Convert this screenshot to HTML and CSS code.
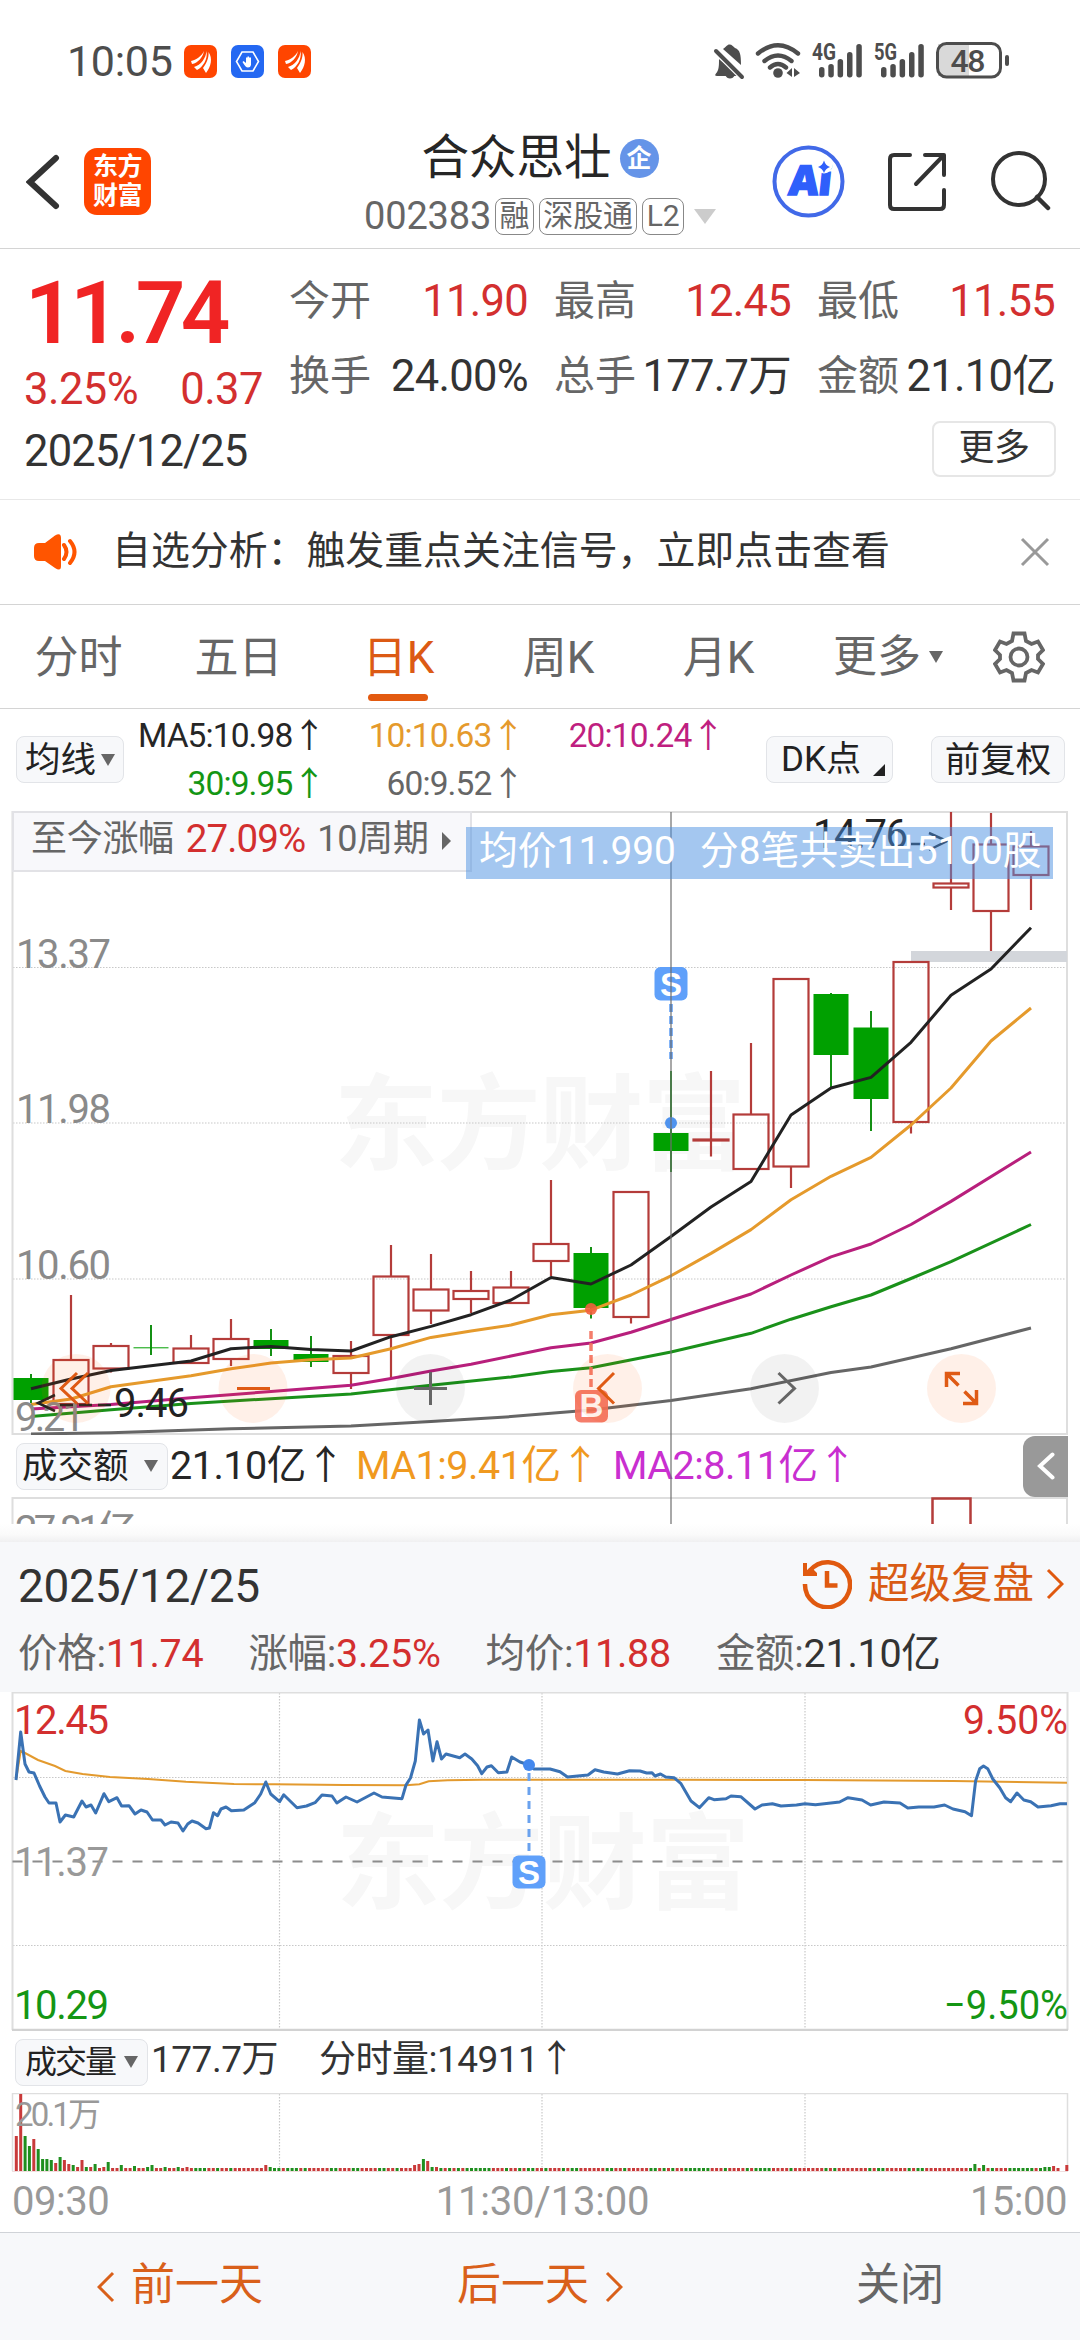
FILE: index.html
```html
<!DOCTYPE html>
<html lang="zh-CN">
<head>
    <meta charset="UTF-8">
    <meta name="viewport" content="width=device-width, initial-scale=1.0">
    <title>合众思壮 002383</title>
    <link rel="stylesheet" href="styles.css">
</head>
<body>

    <!-- status bar -->
    <div class="status-bar">
        <span class="clock">10:05</span>
        <svg class="app-dot" viewBox="0 0 33 33">
            <rect width="33" height="33" rx="7" fill="#ff4500"/>
            <path d="M7 16C12 15 18 11 20 6C19 12 14 18 8 19ZM10 22C17 20 22 13 22.500 6C24 14 19 22 13 25ZM19 23C23 18 25 12 24.500 7C29 13 27 22 22 28Z" fill="#fff"/>
        </svg>
        <svg class="app-dot" viewBox="0 0 33 33">
            <rect width="33" height="33" rx="7" fill="#2468f2"/>
            <path d="M11 7H22L27.500 16.500L22 26H11L5.500 16.500Z" fill="none" stroke="#fff" stroke-width="1.600"/>
            <path d="M12.500 16L15 18V12.500H16.500V11.500H18V12.500H20V20Q19.500 22.500 17 22.500Q14.500 22.500 11.500 17Z" fill="#fff"/>
        </svg>
        <svg class="app-dot" viewBox="0 0 33 33">
            <rect width="33" height="33" rx="7" fill="#ff4500"/>
            <path d="M7 16C12 15 18 11 20 6C19 12 14 18 8 19ZM10 22C17 20 22 13 22.500 6C24 14 19 22 13 25ZM19 23C23 18 25 12 24.500 7C29 13 27 22 22 28Z" fill="#fff"/>
        </svg>
        <svg class="status-icons" viewBox="712 40 300 42">
            <g fill="#4d4d4d">
                <path d="M716 73.500C719 70 719 66 719 59L740 76H717Q714 76 716 73.500ZM723 49C726 47 727 44.500 729.500 44.500S733 46.500 735 48C740 50 741 54 741 65ZM725 75H735Q733 78.500 730 78.500T725 75Z"/>
                <path d="M716 50L742 76" stroke="#fff" stroke-width="8"/>
                <path d="M716 51L742 77" stroke="#4d4d4d" stroke-width="4" stroke-linecap="round"/>
                <circle cx="778" cy="73" r="4.800"/>
                <path d="M792 68V77L786.500 73ZM794 68V77L800 73Z"/>
                <rect x="819" y="67" width="5.500" height="10.500" rx="2.700"/><rect x="828.300" y="64" width="5.500" height="13.500" rx="2.700"/><rect x="837.600" y="59" width="5.500" height="18.500" rx="2.700"/><rect x="847" y="52" width="5.500" height="25.500" rx="2.700"/><rect x="856.300" y="44" width="5.500" height="33.500" rx="2.700"/>
                <rect x="881" y="67" width="5.500" height="10.500" rx="2.700"/><rect x="890.300" y="64" width="5.500" height="13.500" rx="2.700"/><rect x="899.600" y="59" width="5.500" height="18.500" rx="2.700"/><rect x="909" y="52" width="5.500" height="25.500" rx="2.700"/><rect x="918.300" y="44" width="5.500" height="33.500" rx="2.700"/>
                <rect x="1005" y="55" width="4" height="11" rx="2"/>
                <text x="812" y="60" class="net" textLength="24" lengthAdjust="spacingAndGlyphs">4G</text>
                <text x="874" y="60" class="net" textLength="23" lengthAdjust="spacingAndGlyphs">5G</text>
            </g>
            <path d="M758 53.500Q778 37 798 53.500M764.500 61Q778 50 791.500 61M770 67.500Q778 60.500 786 67.500" fill="none" stroke="#4d4d4d" stroke-width="4.400" stroke-linecap="round"/>
            <path d="M938 44H969V76H938Z" fill="#d9d9d9"/>
            <rect x="937.500" y="43.500" width="63" height="33.500" rx="9" fill="none" stroke="#4d4d4d" stroke-width="3"/>
            <text x="950.500" y="72" class="battery" textLength="35">48</text>
        </svg>
    </div>

    <!-- title bar -->
    <div class="header">
        <div class="header-left">
            <svg class="back" viewBox="0 0 34 56"><path d="M30 4L4 28L30 52" fill="none" stroke="#333" stroke-width="6" stroke-linecap="round"/></svg>
            <div class="logo">东方<br>财富</div>
        </div>
        <div class="header-title">
            <div class="name">合众思壮<span class="qi">企</span></div>
            <div class="code">002383<span class="tag tag-first">融</span><span class="tag">深股通</span><span class="tag">L2</span><i class="tri-down light"></i></div>
        </div>
        <div class="header-right">
            <svg class="ai" viewBox="0 0 73 73">
                <circle cx="36.500" cy="36.500" r="34" fill="#fff" stroke="#4169e8" stroke-width="4"/>
                <text x="16" y="50.500" class="ai-text" textLength="43" transform="translate(5 0) skewX(-6)">Ai</text>
                <circle cx="52" cy="20" r="8.500" fill="#fff"/>
                <path d="M52 15.500Q53.500 20.500 58 22Q53.500 23.500 52 28Q50.500 23.500 46 22Q50.500 20.500 52 15.500Z" fill="#2f5ffb"/>
            </svg>
            <svg class="share" viewBox="0 0 58 58"><path d="M22 2H6Q2 2 2 6V52Q2 56 6 56H52Q56 56 56 52V37M37 2H56V22M55 3L28 31" fill="none" stroke="#333" stroke-width="4" stroke-linecap="round" stroke-linejoin="round"/></svg>
            <svg class="search" viewBox="0 0 60 60"><circle cx="28" cy="28" r="26" fill="none" stroke="#333" stroke-width="4"/><path d="M46 46L57 57" stroke="#333" stroke-width="4.500" stroke-linecap="round"/></svg>
        </div>
    </div>

    <!-- quote -->
    <div class="quote">
        <div class="quote-left">
            <div class="price">11.74</div>
            <div class="change"><span>3.25%</span><span>0.37</span></div>
            <div class="date">2025/12/25</div>
        </div>
        <div class="quote-right">
            <div class="cells">
                <div class="cell"><label>今开</label><b class="red">11.90</b></div>
                <div class="cell"><label>最高</label><b class="red">12.45</b></div>
                <div class="cell"><label>最低</label><b class="red">11.55</b></div>
                <div class="cell"><label>换手</label><b>24.00%</b></div>
                <div class="cell"><label>总手</label><b>177.7万</b></div>
                <div class="cell"><label>金额</label><b>21.10亿</b></div>
            </div>
            <div class="more">更多</div>
        </div>
    </div>

    <div class="notice">
        <svg class="speaker" viewBox="0 0 46 38">
            <path d="M6 10H12L22 2.500Q28 -1 28 5V33Q28 39 22 35L12 28H6Q1 28 1 23V15Q1 10 6 10Z" fill="#ff5500"/>
            <path d="M31 12Q36 19 31 26M37 8Q46 19 37 30" fill="none" stroke="#ff5500" stroke-width="4" stroke-linecap="round"/>
        </svg>
        <span>自选分析：触发重点关注信号，立即点击查看</span>
        <svg class="close" viewBox="0 0 30 30"><path d="M2 2L28 28M28 2L2 28" stroke="#999" stroke-width="3"/></svg>
    </div>

    <div class="tabs">
        <span>分时</span>
        <span>五日</span>
        <span class="active">日K</span>
        <span>周K</span>
        <span>月K</span>
        <span class="tab-more">更多<i class="tri-down"></i></span>
        <svg class="gear" viewBox="0 0 52 52"><path d="M20.500 2.500H31.500L33 10L38.500 13L45 10.500L50 19L45 24V28L50 33L45 41.500L38.500 39L33 42L31.500 49.500H20.500L19 42L13.500 39L7 41.500L2 33L7 28V24L2 19L7 10.500L13.500 13L19 10Z" fill="none" stroke="#666" stroke-width="3.800"/><circle cx="26" cy="26" r="8.500" fill="none" stroke="#666" stroke-width="3.800"/></svg>
    </div>

    <!-- moving averages -->
    <div class="ma-bar">
        <div class="btn btn-ma">均线<i class="tri-down"></i></div>
        <div class="ma-values">
            <span>MA5:10.98↑</span><span class="ma10">10:10.63↑</span><span class="ma20">20:10.24↑</span>
            <span class="ma30">30:9.95↑</span><span class="ma60">60:9.52↑</span>
        </div>
        <div class="btn btn-dk">DK点<i class="corner"></i></div>
        <div class="btn btn-fq">前复权</div>
    </div>

    <!-- daily K chart -->
    <div class="k-section">
        <svg class="k-chart" viewBox="0 810 1080 624">
            <text x="334" y="1161" class="watermark" textLength="412">东方财富</text>
            <g stroke="#c8c8c8" stroke-width="1.200" stroke-dasharray="1.500 1.500">
                <path d="M13 966.500H1067M13 1122H1067M13 1278H1067"/>
            </g>
            <path d="M12.500 811H1067V1433H12.500Z" fill="none" stroke="#dedede" stroke-width="2"/>
            <rect x="911" y="950" width="156" height="11" fill="#d3d6db"/>
            <g class="axis">
                <text x="16" y="966.500" textLength="95">13.37</text>
                <text x="16" y="1122" textLength="95">11.98</text>
                <text x="16" y="1278" textLength="95">10.60</text>
            </g>
            <g id="candles"></g>
            <g id="ma-lines" fill="none" stroke-width="3" stroke-linejoin="round"></g>
            <g class="axis"><text x="15" y="1430" textLength="70">9.21</text></g>
            <text x="114" y="1416" class="mark" textLength="75">9.46</text>
            <path d="M55 1394L38 1402L55 1410M60 1404H73M79 1404H92M98 1404H111" fill="none" stroke="#222" stroke-width="2.500"/>
            <text x="813" y="847" class="mark" textLength="95">14.76</text>
            <path d="M911 843H925M929 832L947 840L929 849" fill="none" stroke="#222" stroke-width="2.500"/>

            <!-- B / S trade marks -->
            <g opacity="0.9">
                <path d="M591 1330V1387" stroke="#f4705c" stroke-width="3.500" stroke-dasharray="8 4"/>
                <circle cx="591" cy="1308" r="6" fill="#f4603e"/>
                <rect x="575" y="1389" width="33" height="32.500" rx="6" fill="#f4705c"/>
                <text x="591.500" y="1416" class="bs">B</text>
            </g>
            <path d="M671 1003V1058" stroke="#5b9cf5" stroke-width="3.500" stroke-dasharray="8 4"/>
            <circle cx="671" cy="1122" r="6" fill="#4f93ee"/>
            <rect x="654.500" y="966" width="33" height="33.500" rx="6" fill="#5fa0fa"/>
            <text x="671" y="994.500" class="bs">S</text>

            <!-- round tool buttons -->
            <g fill="rgba(255,90,0,0.09)">
                <circle cx="76" cy="1387.400" r="34.500"/><circle cx="253" cy="1387.400" r="34.500"/><circle cx="607.500" cy="1387.400" r="34.500"/><circle cx="961.500" cy="1387.400" r="34.500"/>
            </g>
            <g fill="rgba(0,0,0,0.05)">
                <circle cx="430.500" cy="1387.400" r="34.500"/><circle cx="784.500" cy="1387.400" r="34.500"/>
            </g>
            <g fill="none" stroke="#df5a14" stroke-width="3">
                <path d="M77 1372L61 1387.400L77 1402.500M88 1372L72 1387.400L88 1402.500M237 1387.400H270M614 1372L598.500 1387.400L614 1402.500"/>
                <path d="M960 1372.500H946.500V1386M946.500 1372.500L958.500 1384.500M963 1402.500H976.500V1389M976.500 1402.500L964.500 1390.500" stroke-width="3.500"/>
            </g>
            <path d="M414 1387.400H447M430.500 1371V1404M778.500 1372L794.500 1387.400L778.500 1402.500" fill="none" stroke="#666" stroke-width="3"/>
        </svg>

        <div class="gain">至今涨幅<em>27.09%</em>10周期<i class="tri-right"></i></div>
        <div class="crosshair"></div>
        <div class="trade-tip"><span>均价11.990</span><span>分8笔共卖出5100股</span></div>

        <div class="vol-head">
            <div class="btn btn-amount">成交额<i class="tri-down"></i></div>
            <span class="amt">21.10亿↑</span>
            <span class="amt amt1">MA1:9.41亿↑</span>
            <span class="amt amt2">MA2:8.11亿↑</span>
            <div class="side-tab"><svg viewBox="0 0 18 28"><path d="M15.500 2.500L3 14L15.500 25.500" fill="none" stroke="#fff" stroke-width="4" stroke-linecap="round"/></svg></div>
        </div>
        <svg class="vol-strip" viewBox="0 1496 1080 27">
            <path d="M12.500 1530V1497H1067V1530" fill="none" stroke="#dedede" stroke-width="2"/>
            <text x="15" y="1543" class="axis" textLength="122">27.81亿</text>
            <path d="M932.500 1530V1497.500H970.500V1530" fill="none" stroke="#b43c3a" stroke-width="2.500"/>
        </svg>
    </div>
    <div class="shade"></div>

    <!-- replay panel -->
    <div class="replay">
        <div class="replay-top">
            <span class="replay-date">2025/12/25</span>
            <span class="replay-link">
                <svg class="history" viewBox="0 0 50 50"><path d="M3 25A22.500 22.500 0 1 0 8 11.500" fill="none" stroke="#e0590f" stroke-width="4.500"/><path d="M1 4H5V11L9 8L15 14V17H1Z" fill="#e0590f"/><path d="M25 12V26.500H35.500" fill="none" stroke="#e0590f" stroke-width="4.500"/></svg>
                超级复盘
                <svg class="chev" viewBox="0 0 18 32"><path d="M2 2L16 16L2 30" fill="none" stroke="#e0590f" stroke-width="3"/></svg>
            </span>
        </div>
        <div class="replay-stats">
            <span>价格:<b class="red">11.74</b></span>
            <span>涨幅:<b class="red">3.25%</b></span>
            <span>均价:<b class="red">11.88</b></span>
            <span>金额:<b>21.10亿</b></span>
        </div>
    </div>

    <!-- minute chart -->
    <svg class="minute-chart" viewBox="0 1691 1080 339">
        <text x="336" y="1900" class="watermark" textLength="414">东方财富</text>
        <path d="M13 1776.500H1067M13 1944.500H1067M279.500 1692V2028M542 1692V2028M805 1692V2028" stroke="#c8c8c8" stroke-width="1.200" stroke-dasharray="1.500 1.500"/>
        <path d="M12.500 2029V1691.500H1067.500V2029" fill="none" stroke="#dedede" stroke-width="2"/>
        <path d="M12 2029H1068" stroke="#d2d2d2" stroke-width="2.500"/>
        <path d="M12.500 1860.500H1067" stroke="#8c8c8c" stroke-width="2" stroke-dasharray="10 10"/>
        <text x="14" y="1732.700" class="axis up" textLength="95">12.45</text>
        <text x="14" y="1874.700" class="axis flat" textLength="95">11.37</text>
        <text x="14" y="2018" class="axis down" textLength="95">10.29</text>
        <text x="963" y="1732.700" class="axis up" textLength="105" lengthAdjust="spacingAndGlyphs">9.50%</text>
        <text x="944" y="2018" class="axis down" textLength="124" lengthAdjust="spacingAndGlyphs">−9.50%</text>
        <polyline id="avg-line" fill="none" stroke="#e39a2e" stroke-width="2"/>
        <polyline id="price-line" fill="none" stroke="#3a72b4" stroke-width="3" stroke-linejoin="round"/>
        <path d="M529 1764V1855" stroke="#6aa2ee" stroke-width="3" stroke-dasharray="8 6" stroke-dashoffset="-8"/>
        <circle cx="529" cy="1764" r="6" fill="#4388ee"/>
        <rect x="512.500" y="1854.500" width="33" height="33" rx="6" fill="#5fa0fa"/>
        <text x="529" y="1883" class="bs">S</text>
    </svg>

    <div class="minute-head">
        <div class="btn btn-vol">成交量<i class="tri-down"></i></div>
        <span>177.7万</span>
        <span class="minute-vol">分时量:14911↑</span>
    </div>

    <svg class="minute-bars" viewBox="0 2092 1080 80">
        <path d="M279.500 2093V2170M542 2093V2170M805 2093V2170" stroke="#c8c8c8" stroke-width="1.200" stroke-dasharray="1.500 1.500"/>
        <path d="M12.500 2170V2092.500H1067.500V2170" fill="none" stroke="#dedede" stroke-width="1.500"/>
        <path d="M12 2170.500H1068" stroke="#efdede" stroke-width="1"/>
        <g id="bars"></g>
        <text x="15" y="2124.700" class="axis small" textLength="86">20.1万</text>
    </svg>

    <div class="times"><span>09:30</span><span class="noon">11:30/13:00</span><span>15:00</span></div>

    <div class="footer">
        <span><svg class="chev" viewBox="0 0 18 32"><path d="M16 2L2 16L16 30" fill="none" stroke="#d9601a" stroke-width="3"/></svg>前一天</span>
        <span>后一天<svg class="chev" viewBox="0 0 18 32"><path d="M2 2L16 16L2 30" fill="none" stroke="#d9601a" stroke-width="3"/></svg></span>
        <span class="shut">关闭</span>
    </div>

    <script src="script.js"></script>
</body>
</html>
```

FILE: styles.css
```css
* {
    box-sizing: border-box;
}

body {
    margin: 0;
    width: 1080px;
    height: 2340px;
    overflow: hidden;
    background: #fff;
    color: #333;
    font-family: Roboto, "Noto Sans CJK SC", sans-serif;
    letter-spacing: -0.5px;
}

svg {
    display: block;
    flex: none;
}

b, em, i {
    font-weight: normal;
    font-style: normal;
}

.red {
    color: #d32f2f;
}

/* --- Small triangles --- */
.tri-down {
    display: block;
    border: 7.5px solid transparent;
    border-top: 12px solid #666;
    border-bottom: 0;
}

.tri-down.light {
    border-width: 11px;
    border-top: 15px solid #ccc;
    border-bottom: 0;
    margin-left: 10px;
}

.tri-right {
    border: 9px solid transparent;
    border-left: 9px solid #666;
    border-right: 0;
    margin: 4px 0 0 13px;
}

.corner {
    border-bottom: 12px solid #222;
    border-left: 12px solid transparent;
    margin: 20px 0 0 12px;
}

/* --- Status bar --- */
.status-bar {
    display: flex;
    height: 110px;
    padding: 40px 68px 0 67px;
}

.clock {
    width: 117px;
    font-size: 43px;
    line-height: 43px;
    color: #4d4d4d;
    letter-spacing: -0.3px;
}

.app-dot {
    width: 33px;
    height: 33px;
    margin: 5px 14px 0 0;
}

.status-icons {
    width: 300px;
    height: 42px;
    margin-left: auto;
}

.net {
    font-size: 23px;
    font-weight: 700;
    letter-spacing: 0;
}

.battery {
    font-size: 32px;
    font-weight: 500;
    fill: #4d4d4d;
    letter-spacing: 0;
}

/* --- Header --- */
.header {
    display: grid;
    grid-template-columns: 308px 1fr 308px;
    height: 139px;
    border-bottom: 1px solid #d4d4d4;
}

.header-left {
    display: flex;
    padding: 38px 0 0 26px;
}

.back {
    width: 34px;
    height: 56px;
    margin: 6px 24px 0 0;
}

.logo {
    width: 67px;
    height: 67px;
    padding-top: 4px;
    border-radius: 13px;
    background: #ff4500;
    color: #fff;
    font-size: 25px;
    font-weight: 700;
    line-height: 29px;
    text-align: center;
}

.header-title {
    display: flex;
    flex-direction: column;
    align-items: center;
    padding-top: 23px;
}

.name {
    display: flex;
    align-items: center;
    height: 50px;
    font-size: 47.5px;
    line-height: 50px;
    color: #262626;
    letter-spacing: 0;
}

.qi {
    width: 39px;
    height: 39px;
    margin-left: 8px;
    border-radius: 50%;
    background: #6594e8;
    color: #fff;
    font-size: 25px;
    font-weight: 700;
    line-height: 39px;
    text-align: center;
}

.code {
    display: flex;
    align-items: center;
    height: 36px;
    margin-top: 15px;
    font-size: 38px;
    color: #666;
    letter-spacing: -0.2px;
}

.tag {
    height: 37px;
    margin-left: 5px;
    padding: 0 3.5px;
    border: 1.5px solid #888;
    border-radius: 8px;
    font-size: 30px;
    line-height: 34px;
}

.tag-first {
    margin-left: 4px;
}

.header-right {
    display: flex;
    padding-top: 35px;
}

.ai {
    width: 73px;
    height: 73px;
}

.ai-text {
    font-family: "Noto Sans", sans-serif;
    font-size: 41px;
    font-weight: 900;
    fill: #2f5ffb;
    letter-spacing: 0;
    stroke: #2f5ffb;
    stroke-width: 1.5px;
}

.share {
    width: 58px;
    height: 58px;
    margin: 8px 0 0 43px;
}

.search {
    width: 60px;
    height: 60px;
    margin: 6px 0 0 45px;
}

/* --- Quote --- */
.quote {
    display: flex;
    height: 251px;
    border-bottom: 1px solid #e8e8e8;
}

.quote-left {
    width: 289px;
    padding: 18px 0 0 24px;
}

.price {
    height: 92px;
    padding-left: 1px;
    font-size: 87px;
    font-weight: 600;
    line-height: 92px;
    color: #f02424;
    letter-spacing: -4.5px;
}

.change {
    display: flex;
    justify-content: space-between;
    width: 239px;
    height: 62px;
    font-size: 43.5px;
    line-height: 62px;
    color: #d32f2f;
}

.date {
    font-size: 43.5px;
    line-height: 62px;
    letter-spacing: -0.8px;
}

.quote-right {
    flex: 1;
    padding: 14px 24px 0 0;
}

.cells {
    display: grid;
    grid-template-columns: 239px 237px 238px;
    column-gap: 26px;
    width: 766px;
}

.cell {
    display: flex;
    justify-content: space-between;
    height: 75px;
    font-size: 43.5px;
    line-height: 77px;
    letter-spacing: -0.7px;
}

.cell label {
    font-size: 41px;
    line-height: 76px;
    color: #666;
    letter-spacing: 0;
}

.more {
    width: 124px;
    height: 56px;
    margin: 8px 0 0 auto;
    border: 2px solid #e6e6e6;
    border-radius: 8px;
    font-size: 36px;
    line-height: 51px;
    text-align: center;
}

/* --- Notice --- */
.notice {
    display: flex;
    align-items: center;
    height: 105px;
    padding: 0 30px 0 33px;
    border-bottom: 1px solid #d4d4d4;
    font-size: 38.9px;
    line-height: 46px;
    letter-spacing: 0;
}

.notice span {
    padding-bottom: 3px;
}

.speaker {
    width: 46px;
    height: 38px;
    margin-right: 33px;
}

.close {
    width: 30px;
    height: 30px;
    margin-left: auto;
}

/* --- Tabs --- */
.tabs {
    display: flex;
    height: 104px;
    border-bottom: 1px solid #d4d4d4;
    font-size: 44px;
    line-height: 106px;
    color: #666;
    letter-spacing: 0;
}

.tabs span {
    position: relative;
    width: 160px;
    padding-right: 3px;
    text-align: center;
}

.tabs .tab-more {
    display: flex;
    align-items: center;
    width: 193px;
    padding-left: 33px;
}

.tab-more .tri-down {
    margin-left: 8px;
}

.tabs .active {
    color: #dc5a14;
}

.active::after {
    content: "";
    position: absolute;
    left: 48px;
    top: 89px;
    width: 60px;
    height: 7px;
    border-radius: 4px;
    background: #e35a10;
}

.gear {
    width: 52px;
    height: 52px;
    margin: 26px 0 0 0;
}

/* --- Buttons --- */
.btn {
    display: flex;
    align-items: center;
    flex: none;
    height: 47px;
    border: 1.5px solid #e2e4e8;
    border-radius: 8px;
    background: #f7f8fa;
    color: #222;
    font-size: 35.5px;
    letter-spacing: 0;
    line-height: 40px;
}

/* --- MA bar --- */
.ma-bar {
    display: flex;
    height: 102px;
    padding: 27px 15px 0 16px;
}

.btn-ma {
    width: 108px;
    padding-left: 8px;
}

.btn-ma .tri-down {
    margin-left: 5px;
}

.ma-values {
    display: grid;
    grid-template-columns: 201px 199px 200px;
    grid-template-rows: 48px 47px;
    align-content: start;
    justify-items: end;
    width: 642px;
    margin-top: -24px;
    font-size: 33.5px;
    line-height: 47px;
    color: #262626;
    letter-spacing: -0.9px;
}

.ma10 { color: #e59a2c; }
.ma20 { color: #bf1f80; }
.ma30 { color: #149614; }
.ma60 { color: #666; }

.btn-dk {
    width: 127px;
    padding-left: 14px;
    font-size: 35px;
}

.btn-fq {
    width: 134px;
    margin-left: 38px;
    justify-content: center;
}

/* --- K chart --- */
.k-section {
    position: relative;
    height: 713px;
}

.k-chart {
    width: 1080px;
    height: 624px;
}

.watermark {
    font-size: 104px;
    font-weight: 700;
    fill: #f7f7f7;
    letter-spacing: 0;
}

.axis {
    font-size: 40px;
    fill: #8a8a8a;
    letter-spacing: 0;
}

.axis.up { fill: #d32f2f; }
.axis.flat { fill: #999; }
.axis.down { fill: #149614; }

.axis.small {
    font-size: 33px;
    fill: #999;
}

.mark {
    font-size: 40px;
    fill: #222;
    letter-spacing: 0;
}

.bs {
    font-family: "Liberation Sans", sans-serif;
    font-size: 33px;
    font-weight: 700;
    fill: #fff;
    text-anchor: middle;
    letter-spacing: 0;
}

.gain {
    position: absolute;
    left: 12px;
    top: 0;
    display: flex;
    align-items: center;
    width: 460px;
    height: 61px;
    padding: 0 0 5px 17px;
    border: 2px solid #e2e2e6;
    background: #f8f8fb;
    color: #666;
    font-size: 36px;
    line-height: 46px;
    letter-spacing: -0.3px;
}

.gain em {
    margin: 0 12px;
    font-size: 38.5px;
    color: #d32f2f;
    letter-spacing: -0.9px;
}

.crosshair {
    position: absolute;
    left: 670px;
    top: 1px;
    width: 2px;
    height: 712px;
    background: rgba(110, 110, 110, 0.6);
}

.trade-tip {
    position: absolute;
    left: 466px;
    top: 16px;
    display: flex;
    gap: 24px;
    width: 587px;
    height: 52px;
    padding-left: 13px;
    background: rgba(74, 144, 226, 0.5);
    color: #fff;
    font-size: 38.8px;
    line-height: 48px;
    letter-spacing: 0;
    white-space: nowrap;
}

/* --- Turnover --- */
.vol-head {
    display: flex;
    align-items: center;
    height: 62px;
    padding: 0 12px 0 16px;
    font-size: 39.5px;
    white-space: nowrap;
}

.btn-amount {
    width: 152px;
    padding-left: 5px;
}

.btn-amount .tri-down {
    margin-left: 15px;
}

.amt {
    width: 186px;
    padding-left: 2px;
    color: #262626;
    line-height: 58px;
}

.amt1 {
    width: 257px;
    color: #f0991f;
}

.amt2 {
    width: 260px;
    color: #c92fd0;
}

.side-tab {
    display: flex;
    align-items: center;
    justify-content: center;
    width: 45px;
    height: 61px;
    margin-left: auto;
    border-radius: 12px 0 0 12px;
    background: #999;
}

.side-tab svg {
    width: 18px;
    height: 28px;
}

.vol-strip {
    width: 1080px;
    height: 27px;
}

.shade {
    height: 18px;
    background: linear-gradient(#fff, #fafafa 60%, #f0f0f1);
}

/* --- Replay --- */
.replay {
    height: 150px;
    padding: 13px 16px 0 18px;
    background: #f7f8fa;
}

.replay-top {
    display: flex;
    justify-content: space-between;
    height: 62px;
}

.replay-date {
    font-size: 46px;
    line-height: 62px;
    letter-spacing: -0.3px;
}

.replay-link {
    display: flex;
    align-items: center;
    height: 60px;
    font-size: 41.5px;
    line-height: 56px;
    padding-bottom: 2px;
    color: #d95b14;
    letter-spacing: 0;
}

.history {
    width: 50px;
    height: 50px;
    margin-right: 16px;
}

.chev {
    width: 18px;
    height: 32px;
}

.replay-link .chev {
    margin-left: 12px;
}

.replay-stats {
    display: flex;
    gap: 45px;
    font-size: 39.5px;
    line-height: 73px;
    color: #666;
    letter-spacing: -0.3px;
}

.replay-stats b {
    color: #333;
}

.replay-stats .red {
    color: #d32f2f;
}

/* --- Minute chart --- */
.minute-chart {
    width: 1080px;
    height: 339px;
}

.minute-head {
    display: flex;
    align-items: center;
    height: 62px;
    padding-left: 15px;
    font-size: 37px;
    line-height: 50px;
}

.minute-head > span {
    padding-bottom: 5px;
}

.btn-vol {
    width: 133px;
    margin-right: 3px;
    padding-left: 9px;
    font-size: 32px;
    letter-spacing: -2px;
}

.btn-vol .tri-down {
    margin-left: 9px;
}

.minute-vol {
    margin-left: 41px;
}

.minute-bars {
    width: 1080px;
    height: 80px;
}

.times {
    display: flex;
    justify-content: space-between;
    height: 59px;
    padding: 0 13px 0 12px;
    font-size: 40px;
    line-height: 58px;
    color: #999;
}

.times .noon {
    padding-left: 6px;
    letter-spacing: -0.2px;
}

/* --- Footer --- */
.footer {
    display: flex;
    height: 109px;
    border-top: 1px solid #d0d3d8;
    background: #f7f8fa;
    font-size: 44px;
    line-height: 60px;
    color: #d9601a;
    letter-spacing: 0;
}

.footer span {
    display: flex;
    align-items: center;
    justify-content: center;
    gap: 16px;
    width: 360px;
    padding-bottom: 4px;
}

.footer .chev {
    margin-top: 3px;
}

.footer .shut {
    color: #666;
}
```

FILE: script.js
```js
const NS = 'http://www.w3.org/2000/svg';

function add(parent, tag, attrs) {
    const el = document.createElementNS(NS, tag);
    for (const key in attrs) el.setAttribute(key, attrs[key]);
    parent.appendChild(el);
}

// [high, top, bottom, low, colour], 40px apart
const candles = [
    [1373, 1377, 1399, 1402, 'g'], [1294, 1359, 1403, 1403, 'r'], [1342, 1345, 1367.5, 1371.5, 'r'],
    [1324, 1346.3, 1347.3, 1354, 'g'], [1334, 1347.5, 1362, 1362, 'r'], [1318, 1338, 1358, 1365, 'r'],
    [1328, 1339, 1348, 1355, 'g'], [1335, 1353, 1361, 1366, 'g'], [1340, 1355, 1372, 1388, 'r'],
    [1244, 1275.5, 1334, 1377, 'r'], [1253, 1288.5, 1309.5, 1323, 'r'], [1270, 1290, 1298, 1312, 'r'],
    [1270, 1286.5, 1302, 1302, 'r'], [1179, 1243, 1260, 1275, 'r'], [1246, 1252, 1307, 1317.5, 'g'],
    [1191, 1191, 1316, 1322.5, 'r'], [1070, 1132, 1150, 1171, 'g'], [1070, 1138.5, 1139.5, 1155.5, 'r'],
    [1042, 1113.5, 1168, 1168, 'r'], [978, 978, 1165.5, 1187, 'r'], [992, 993, 1054, 1088, 'g'],
    [1010, 1026.5, 1098, 1130, 'g'], [961, 961, 1121, 1132.5, 'r'], [811, 882.5, 886.5, 909, 'r'],
    [812, 843.5, 910, 950, 'r'], [830, 845.5, 874, 909, 'r']
];

const candleGroup = document.getElementById('candles');
candles.forEach(([high, top, bottom, low, c], i) => {
    const x = 31 + i * 40;
    if (c === 'g') {
        add(candleGroup, 'path', { d: `M${x} ${high}V${low}`, stroke: '#149014', 'stroke-width': 2 });
        add(candleGroup, 'rect', { x: x - 17.5, y: top, width: 35, height: bottom - top, fill: '#00a000' });
    } else {
        add(candleGroup, 'path', { d: `M${x} ${high}V${top}M${x} ${bottom}V${low}`, stroke: '#b43c3a', 'stroke-width': 2.2 });
        add(candleGroup, 'rect', { x: x - 17.5, y: top, width: 35, height: bottom - top, fill: 'none', stroke: '#b43c3a', 'stroke-width': 2.2 });
    }
});

const lines = [
    ['#666', '31,1433 111,1431.8 231,1427.7 351,1425 431,1420.5 511,1415.6 591,1409 671,1399.4 751,1387.7 831,1371.5 871,1366 951,1347.8 1031,1327'],
    ['#1a911a', '31,1415.6 111,1408.7 191,1402.5 271,1397.7 351,1393 431,1384.3 511,1376 551,1370.5 591,1366.7 671,1351 751,1332.3 791,1318.2 831,1305.8 871,1294 911,1277.5 951,1260.7 1031,1223.5'],
    ['#b81f7c', '31,1408 111,1403.6 191,1396.7 271,1390.5 351,1384.3 391,1377.4 431,1370 471,1363.3 511,1355 551,1346.8 591,1342 631,1331.3 671,1318.5 751,1293 791,1274 831,1255.9 871,1243 911,1223.5 951,1200.4 1031,1151'],
    ['#e59a2c', '31,1403.6 71,1398 111,1385.7 191,1374.7 231,1367.8 271,1362 311,1358.8 351,1357 391,1347.8 431,1336.4 471,1330 511,1324 551,1313.7 591,1309.2 631,1294 671,1274.8 711,1252.4 751,1228.6 791,1198.7 831,1175.3 871,1156.3 911,1124 951,1087 991,1040 1031,1007'],
    ['#222', '31,1387.7 71,1378 111,1369.5 191,1360 231,1347.8 271,1345.4 311,1348.5 351,1350 391,1335.7 431,1325.4 471,1313.7 511,1299 551,1276.5 591,1283 631,1264 671,1235.5 711,1206 751,1180.4 791,1114 831,1087 871,1076.4 911,1041.3 951,994.3 991,968 1031,926.7']
];
lines.forEach(([stroke, points]) => add(document.getElementById('ma-lines'), 'polyline', { points, stroke }));

document.getElementById('avg-line').setAttribute('points',
    '16,1779 20.7,1750 25,1752 38,1759 55,1765 65.4,1770 82.6,1773 110,1776 148,1778 186,1780.7 234,1783 275,1783.3 344,1784 406,1784.3 419.4,1783.3 428.7,1780.3 447.7,1779.3 482,1778.7 678,1778.7 805,1779 953,1780 1067,1781.7');

document.getElementById('price-line').setAttribute('points',
    '16,1779 20.7,1731 25,1763 29,1771 34,1772 39.6,1785 45,1796 49,1802 56,1802 60,1821 65.4,1814 73.7,1816 82,1800 86,1806 91,1804 95.7,1812 104,1792.7 108.8,1800.7 117,1796.7 121.6,1805 129,1804.7 135,1813 141,1809 147,1811 152.5,1819 161,1819 165,1824 171,1821 178,1822 183,1830 187.7,1823 192,1820 198,1822 206,1827.7 209.4,1827 213.5,1811.7 217.6,1814.7 221,1808 226,1806 231.4,1809.7 243.8,1809 254.8,1801.7 260.7,1793 265.8,1781 270.7,1793 279.6,1800.7 283.7,1793.7 297,1806.7 306.5,1805 315,1801.7 322,1794 332,1795 336.8,1802 346,1796 357,1801 374,1792 382,1796 402,1797.7 406,1784 410.5,1777 415.3,1760 419.4,1719 423.6,1733 428,1729 432.9,1760 437,1740.7 441.5,1758 446,1753 459.7,1756.7 465,1753 471.8,1758 477.6,1764.7 481.8,1772.7 487,1766 491.4,1764.7 498.3,1771.7 506.9,1771 511.7,1756 520,1761 529.3,1764 533.7,1768 ' +
    '550,1768 560,1770.7 567.5,1776 588,1774 595,1768.7 603.7,1771 617.5,1773 629.5,1769.7 640,1770 646.7,1772 652,1771.7 655,1775 660.5,1773 665.7,1776 674,1776.7 681,1782.7 691,1800 699.4,1806.7 708.7,1796.7 714,1798.7 726,1797.7 731,1795 740.8,1795.7 755,1808 762,1804 772.4,1802.7 781,1805 796.5,1804 805,1802.7 815.5,1803.7 839.6,1801 848,1796.7 862,1799 870.6,1804 884,1801 900,1802 907.8,1807 918.8,1806 934,1806 944.6,1804 953,1808 965,1810.7 971.5,1814.7 975.6,1780 979.7,1767.7 983.5,1765 987.7,1767.7 992.8,1778 999.7,1786.7 1005.6,1796.7 1010.7,1800.7 1017,1792 1023.8,1799 1030.7,1800.7 1038,1806 1051,1804.7 1060,1802.7 1067,1802.7');

// one bar a minute, r = up, g = down
const colors =
    'rrggrggggrgrrgrrgrgrrgrrgrrgrrggrrgrrgrrrgggrrgrrgrrrrrrrrgggrggg' +
    'rgrrrrrggrrrggrrrrggrrgrrrrrgrgrgrgrgrggggggrrrgrrgrggrrgrrrgrgg' +
    'rrrrrrggrrgrrrrrggrgrgrrggggggrrrgrrrrgrggggrrrrgrrrrrrrgrgrrrrr' +
    'rrgrggrrrrrgrggrrrrrrrrrrggrgrgrrrggggggrgggrrrrrgr';
const heights = { 0: 35, 1: 77, 2: 35, 3: 25, 4: 32, 5: 22, 6: 12, 7: 12, 8: 11, 9: 8, 10: 14, 11: 11, 12: 7, 13: 6, 14: 4, 15: 11, 16: 4, 17: 4, 18: 7, 20: 4, 21: 9, 24: 6, 27: 5, 30: 4, 31: 6, 34: 4, 37: 4, 39: 4, 57: 6, 58: 4, 91: 6, 92: 7, 93: 12, 94: 10, 95: 4, 96: 4, 219: 7, 221: 6, 235: 4, 236: 4, 237: 5, 239: 0, 240: 6 };
for (let i = 0; i <= 240; i++) {
    const h = i in heights ? heights[i] : 3;
    add(document.getElementById('bars'), 'rect', {
        x: (14.8 + i * 4.377).toFixed(1), y: 2170 - h, width: 3, height: h,
        fill: colors[i] === 'g' ? '#1f8f1f' : '#c93a3a'
    });
}
```
